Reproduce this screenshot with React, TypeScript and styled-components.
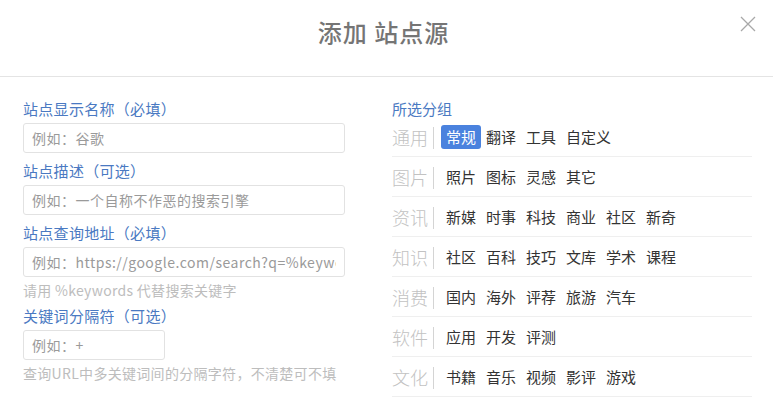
import styled, { createGlobalStyle } from 'styled-components';

const GlobalStyle = createGlobalStyle`
  body {
    margin: 0;
    background: #fff;
    font-family: "Noto Sans CJK SC", "Noto Sans", sans-serif;
  }
  * { box-sizing: border-box; }
`

const groups = [
    { name: '通用', items: ['常规', '翻译', '工具', '自定义'] },
    { name: '图片', items: ['照片', '图标', '灵感', '其它'] },
    { name: '资讯', items: ['新媒', '时事', '科技', '商业', '社区', '新奇'] },
    { name: '知识', items: ['社区', '百科', '技巧', '文库', '学术', '课程'] },
    { name: '消费', items: ['国内', '海外', '评荐', '旅游', '汽车'] },
    { name: '软件', items: ['应用', '开发', '评测'] },
    { name: '文化', items: ['书籍', '音乐', '视频', '影评', '游戏'] },
]

const App = () => {
    return (
        <Modal>
            <GlobalStyle />
            <Header>
                <Title>添加 站点源</Title>
                <Close aria-label="close">
                    <svg width="16" height="16" viewBox="0 0 16 16">
                        <path d="M1 1 L15 15 M15 1 L1 15" stroke="#a8a8a8" strokeWidth="1.3" fill="none" />
                    </svg>
                </Close>
            </Header>
            <Body>
                <FormColumn>
                    <Field>
                        <Label>站点显示名称（必填）</Label>
                        <Input placeholder="例如：谷歌" />
                    </Field>
                    <Field>
                        <Label>站点描述（可选）</Label>
                        <Input placeholder="例如：一个自称不作恶的搜索引擎" />
                    </Field>
                    <Field>
                        <Label>站点查询地址（必填）</Label>
                        <Input placeholder="例如：https://google.com/search?q=%keywords" />
                        <Hint>请用 %keywords 代替搜索关键字</Hint>
                    </Field>
                    <Field>
                        <Label>关键词分隔符（可选）</Label>
                        <Input $short placeholder="例如：+" />
                        <Hint>查询URL中多关键词间的分隔字符，不清楚可不填</Hint>
                    </Field>
                </FormColumn>
                <GroupColumn>
                    <GroupTitle>所选分组</GroupTitle>
                    {groups.map((g, gi) => (
                        <GroupRow key={g.name}>
                            <GroupName>{g.name}</GroupName>
                            <Divider />
                            {g.items.map((item, ii) => (
                                <Tag key={item} $active={gi === 0 && ii === 0}>{item}</Tag>
                            ))}
                        </GroupRow>
                    ))}
                </GroupColumn>
            </Body>
        </Modal>
    );
}

export default App;

const Modal = styled.div`
    width: 773px;
    height: 400px;
    overflow: hidden;
    background: #fff;
`

const Header = styled.div`
    position: relative;
    height: 77px;
    border-bottom: 1px solid #e4e4e4;
    display: flex;
    justify-content: center;
    padding-top: 14px;
`

const Title = styled.h1`
    margin: 0 0 0 -6px;
    font-size: 24px;
    line-height: 36px;
    font-weight: 500;
    color: #757575;
    letter-spacing: 1px;
`

const Close = styled.button`
    position: absolute;
    top: 16px;
    right: 17px;
    border: none;
    background: none;
    padding: 0;
    width: 16px;
    height: 16px;
    cursor: pointer;
    svg { display: block; }
`

const Body = styled.div`
    display: flex;
    padding: 22px 0 0 23px;
    gap: 47px;
`

const FormColumn = styled.div`
    width: 322px;
    display: flex;
    flex-direction: column;
    gap: 8px;
`

const Field = styled.div`
    display: flex;
    flex-direction: column;
`

const Label = styled.label`
    font-size: 15px;
    line-height: 20px;
    color: #4a79c2;
    margin-bottom: 4px;
    letter-spacing: 0.3px;
`

const Input = styled.input<{ $short?: boolean }>`
    width: ${props => props.$short ? '142px' : '322px'};
    height: 30px;
    border: 1px solid #e2e2e2;
    border-radius: 3px;
    padding: 0 8px;
    font-family: inherit;
    font-size: 14px;
    color: #333;
    outline: none;
    &::placeholder {
        color: #9a9a9a;
        letter-spacing: 0.5px;
    }
`

const Hint = styled.p`
    margin: 3px 0 -2px;
    font-size: 14px;
    line-height: 20px;
    color: #bdbdbd;
    letter-spacing: 0.3px;
`

const GroupColumn = styled.div`
    width: 360px;
    display: flex;
    flex-direction: column;
`

const GroupTitle = styled.div`
    font-size: 15px;
    line-height: 17px;
    padding-top: 1px;
    color: #4a79c2;
`

const GroupRow = styled.div`
    display: flex;
    align-items: center;
    height: 40px;
    border-bottom: 1px solid #efefef;
`

const GroupName = styled.span`
    flex-shrink: 0;
    white-space: nowrap;
    font-size: 18px;
    font-weight: 300;
    color: #c2c2c2;
    width: 37px;
`

const Divider = styled.span`
    flex-shrink: 0;
    width: 1px;
    height: 22px;
    background: #d4d4d4;
    margin: 2px 7px 0 4px;
`

const Tag = styled.span<{ $active?: boolean }>`
    white-space: nowrap;
    font-size: 15px;
    line-height: 18px;
    padding: 3px 5px;
    border-radius: 3px;
    color: ${props => props.$active ? '#fff' : '#333'};
    background: ${props => props.$active ? '#4a82de' : 'transparent'};
`
